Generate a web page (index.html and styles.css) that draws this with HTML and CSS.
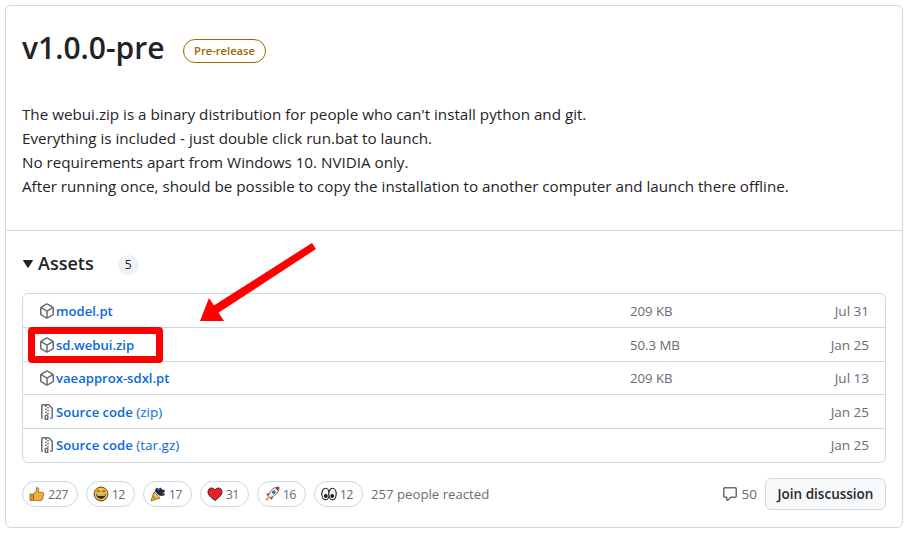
FILE: index.html
```html
<!DOCTYPE html>
<html lang="en">
<head>
  <meta charset="UTF-8">
  <title>v1.0.0-pre</title>
  <link rel="stylesheet" href="styles.css">
</head>
<body>

  <svg width="0" height="0" class="defs">
    <symbol id="i-package" viewBox="0 0 16 16"><path d="m8.878.392 5.25 3.045c.54.314.872.89.872 1.514v6.098a1.75 1.75 0 0 1-.872 1.514l-5.25 3.045a1.75 1.75 0 0 1-1.756 0l-5.25-3.045A1.75 1.75 0 0 1 1 11.049V4.951c0-.624.332-1.201.872-1.514L7.122.392a1.75 1.75 0 0 1 1.756 0ZM7.875 1.69l-4.63 2.685L8 7.133l4.755-2.758-4.63-2.685a.248.248 0 0 0-.25 0ZM2.5 5.677v5.372c0 .09.047.171.125.216l4.625 2.683V8.432Zm6.25 8.271 4.625-2.683a.25.25 0 0 0 .125-.216V5.677L8.75 8.432Z"/></symbol>
    <symbol id="i-zip" viewBox="0 0 16 16"><path d="M3.5 1.75v11.5c0 .09.048.173.126.217a.75.75 0 0 1-.752 1.298A1.748 1.748 0 0 1 2 13.25V1.75C2 .784 2.784 0 3.75 0h5.586c.464 0 .909.185 1.237.513l2.914 2.914c.329.328.513.773.513 1.237v8.586A1.75 1.75 0 0 1 12.25 15h-.5a.75.75 0 0 1 0-1.5h.5a.25.25 0 0 0 .25-.25V4.664a.25.25 0 0 0-.073-.177L9.513 1.573a.25.25 0 0 0-.177-.073H7.25a.75.75 0 0 1 0 1.5h-.5a.75.75 0 0 1 0-1.5h-3a.25.25 0 0 0-.25.25Zm3.75 8.75h.5c.966 0 1.75.784 1.75 1.75v3a.75.75 0 0 1-.75.75h-2.5a.75.75 0 0 1-.75-.75v-3c0-.966.784-1.75 1.75-1.75ZM6 5.25a.75.75 0 0 1 .75-.75h.5a.75.75 0 0 1 0 1.5h-.5A.75.75 0 0 1 6 5.25Zm.75 2.25h.5a.75.75 0 0 1 0 1.5h-.5a.75.75 0 0 1 0-1.5ZM8 6.75A.75.75 0 0 1 8.75 6h.5a.75.75 0 0 1 0 1.5h-.5A.75.75 0 0 1 8 6.75ZM8.75 3h.5a.75.75 0 0 1 0 1.5h-.5a.75.75 0 0 1 0-1.5ZM8 9.75A.75.75 0 0 1 8.75 9h.5a.75.75 0 0 1 0 1.5h-.5A.75.75 0 0 1 8 9.75Zm-1 2.5v2.25h1v-2.25a.25.25 0 0 0-.25-.25h-.5a.25.25 0 0 0-.25.25Z"/></symbol>
  </svg>

  <div class="release">
    <div class="release-main">
      <div class="title-row">
        <h1>v1.0.0-pre</h1>
        <span class="label">Pre-release</span>
      </div>
      <div class="notes">
        <p>The webui.zip is a binary distribution for people who can't install python and git.</p>
        <p>Everything is included - just double click run.bat to launch.</p>
        <p>No requirements apart from Windows 10. NVIDIA only.</p>
        <p>After running once, should be possible to copy the installation to another computer and launch there offline.</p>
      </div>
    </div>

    <div class="release-foot">
      <div class="assets-head">
        <svg class="caret" viewBox="0 0 10 8" width="10" height="8"><path d="M.5.5h9L5 7.5z" stroke="#1f2328" stroke-linejoin="round"/></svg>
        <span class="assets-title">Assets</span>
        <span class="counter">5</span>
      </div>

      <ul class="assets">
        <li>
          <span class="asset-name"><svg class="icon"><use href="#i-package"/></svg><a href="#">model.pt</a></span>
          <span class="asset-size">209 KB</span>
          <span class="asset-date">Jul 31</span>
        </li>
        <li>
          <span class="asset-name"><svg class="icon"><use href="#i-package"/></svg><a href="#">sd.webui.zip</a></span>
          <span class="asset-size">50.3 MB</span>
          <span class="asset-date">Jan 25</span>
        </li>
        <li>
          <span class="asset-name"><svg class="icon"><use href="#i-package"/></svg><a href="#">vaeapprox-sdxl.pt</a></span>
          <span class="asset-size">209 KB</span>
          <span class="asset-date">Jul 13</span>
        </li>
        <li>
          <span class="asset-name"><svg class="icon"><use href="#i-zip"/></svg><a href="#">Source code <span class="ext">(zip)</span></a></span>
          <span class="asset-size"></span>
          <span class="asset-date">Jan 25</span>
        </li>
        <li>
          <span class="asset-name"><svg class="icon"><use href="#i-zip"/></svg><a href="#">Source code <span class="ext">(tar.gz)</span></a></span>
          <span class="asset-size"></span>
          <span class="asset-date">Jan 25</span>
        </li>
      </ul>

      <div class="foot-row">
        <div class="reactions">
          <span class="pill pill-thumb">
            <svg class="emoji" viewBox="0 0 16 16"><path d="M1 8h3.500v6.500H1z" fill="#d99a2b" stroke="#6b4a12" stroke-width=".6"/><path d="M4.500 8 7 5.200l.7-3.700c1.500-.4 2.300.8 2.100 2.300L9.300 6.300h4.200c1 0 1.500.9 1.200 1.800l-1.300 5.500c-.2.700-.7 1-1.400 1H6c-.8 0-1.500-.4-1.500-1z" fill="#f0ae37" stroke="#7a5514" stroke-width=".7"/></svg>
            <span>227</span>
          </span>
          <span class="pill pill-smile">
            <svg class="emoji" viewBox="0 0 16 16"><circle cx="8" cy="8" r="6.900" fill="#f5bd34" stroke="#4a3608" stroke-width=".9"/><path d="M3.800 5.700c.9-1 1.900-1 2.800 0M9.400 5.700c.9-1 1.900-1 2.800 0" fill="none" stroke="#33260a" stroke-width="1"/><path d="M3.300 8h9.400c0 3.200-2.300 4.800-4.700 4.800S3.300 11.200 3.300 8z" fill="#3a2a10"/><path d="M4.200 8.300h7.600v1.300H4.200z" fill="#fff"/></svg>
            <span>12</span>
          </span>
          <span class="pill pill-party">
            <svg class="emoji" viewBox="0 0 16 16"><path d="M1 15 4 6l6 6z" fill="#f5c242" stroke="#6b4e10" stroke-width=".7"/><path d="M3 9l4 4-2 .8-2.700-2.700z" fill="#cf8a2a"/><path d="M4.500 5 6.500 1.500l2 1.500 2-1.500 1.500 2 3 .5-1 3 1 2-3 1-3-.5z" fill="#1b2a45"/><circle cx="8.500" cy="3.500" r="1.100" fill="#2f62b5"/><circle cx="13" cy="7" r="1.200" fill="#b5333a"/></svg>
            <span>17</span>
          </span>
          <span class="pill pill-heart">
            <svg class="emoji" viewBox="0 0 16 16"><path d="M8 14.500C3.500 11.200 1 8.800 1 5.800 1 3.500 2.700 2 4.600 2 6 2 7.300 2.800 8 4 8.700 2.800 10 2 11.400 2 13.300 2 15 3.500 15 5.800c0 3-2.500 5.400-7 8.700z" fill="#e51f2d" stroke="#3f0d12" stroke-width=".9"/></svg>
            <span>31</span>
          </span>
          <span class="pill pill-rocket">
            <svg class="emoji" viewBox="0 0 16 16"><path d="M15 1c-4 0-7.500 2-9.500 6L4 10l2 2 3-1.500c4-2 6-5.500 6-9.500z" fill="#e9eef3" stroke="#2f3a48" stroke-width=".7"/><path d="M15 1c-1.500 0-2.800.2-4 .8L14.200 5c.6-1.200.8-2.500.8-4z" fill="#d8232a"/><circle cx="9.800" cy="6.200" r="1.500" fill="#3f8fd6" stroke="#2a3a4c" stroke-width=".6"/><path d="M5.500 7 2 8l2 2zM9 10.500 8 14l-2-2z" fill="#c7303a"/><path d="M4 11l1 1c-.5 1.500-1.500 2.500-3.500 2.800C1.700 13 2.500 11.800 4 11z" fill="#f08a24"/></svg>
            <span>16</span>
          </span>
          <span class="pill pill-eyes">
            <svg class="emoji" viewBox="0 0 16 16"><ellipse cx="4.500" cy="8" rx="3.700" ry="5.800" fill="#f6f6f6" stroke="#222" stroke-width="1.100"/><ellipse cx="11.500" cy="8" rx="3.700" ry="5.800" fill="#f6f6f6" stroke="#222" stroke-width="1.100"/><circle cx="4.800" cy="10" r="1.900" fill="#1c1c1c"/><circle cx="11.200" cy="10" r="1.900" fill="#1c1c1c"/></svg>
            <span>12</span>
          </span>
          <span class="reacted">257 people reacted</span>
        </div>
        <div class="discussion">
          <svg class="icon" viewBox="0 0 16 16"><path d="M1 2.750C1 1.784 1.784 1 2.750 1h10.500c.966 0 1.750.784 1.750 1.750v7.500A1.750 1.750 0 0 1 13.250 12H9.060l-2.573 2.573A1.458 1.458 0 0 1 4 13.543V12H2.750A1.750 1.750 0 0 1 1 10.250Zm1.750-.25a.25.25 0 0 0-.25.25v7.500c0 .138.112.25.25.25h2a.75.75 0 0 1 .75.75v2.190l2.720-2.720a.749.749 0 0 1 .53-.22h4.500a.25.25 0 0 0 .25-.25v-7.500a.25.25 0 0 0-.25-.25Z"/></svg>
          <span class="comment-count">50</span>
          <button class="btn">Join discussion</button>
        </div>
      </div>
    </div>
  </div>

  <!-- annotation drawn over the screenshot -->
  <div class="mark-box"></div>
  <svg class="mark-arrow" width="130" height="90" viewBox="0 0 130 90">
    <path d="M117 3 121 9 23 73 18 66z" fill="#fe0000"/>
    <polygon points="5,81 14,58 29,81" fill="#fe0000"/>
  </svg>

</body>
</html>
```

FILE: styles.css
```css
* {
  box-sizing: border-box;
}
body {
  margin: 0;
  background: #fff;
  color: #1f2328;
  font-family: "Open Sans", "Noto Sans", Arial, sans-serif;
  font-size: 14px;
  position: relative;
  width: 910px;
  height: 540px;
  overflow: hidden;
}
.defs {
  display: block;
  height: 0;
}
.release {
  margin: 5px 0 0 5px;
  width: 898px;
  height: 523px;
  border: 1px solid #d0d7de;
  border-radius: 6px;
}
.release-main {
  height: 225px;
  padding: 0 16px;
  border-bottom: 1px solid #d0d7de;
}
.title-row {
  display: flex;
  align-items: flex-start;
  gap: 18px;
  padding-top: 18px;
  height: 74px;
}
h1 {
  margin: 0;
  font-size: 30px;
  font-weight: 600;
  line-height: 48px;
}
.label {
  margin-top: 15px;
  border: 1px solid #9a6700;
  border-radius: 12px;
  color: #9a6700;
  font-size: 11.2px;
  font-weight: 600;
  line-height: 22px;
  height: 24px;
  padding: 0 10.5px;
}
.notes {
  margin-top: 22px;
  font-size: 15.2px;
  line-height: 24px;
}
.notes p {
  margin: 0;
}
.release-foot {
  padding: 0 16px;
}
.assets-head {
  display: flex;
  align-items: center;
  height: 62px;
  padding-top: 2px;
}
.caret {
  fill: #1f2328;
  margin: 1px 5px 0 1px;
}
.assets-title {
  font-size: 18px;
  font-weight: 600;
}
.counter {
  margin: 3px 0 0 24px;
  background: #eff2f5;
  border-radius: 10px;
  font-size: 12px;
  font-weight: 500;
  line-height: 20px;
  padding: 0 7px;
}
.assets {
  list-style: none;
  margin: 0;
  padding: 0;
  border: 1px solid #d0d7de;
  border-radius: 6px;
  height: 170px;
}
.assets li {
  display: grid;
  grid-template-columns: 1fr 156px 83px;
  align-items: center;
  height: 33.4px;
  padding: 0.6px 16px 0;
  border-top: 1px solid #d0d7de;
}
.assets li:first-child {
  border-top: none;
}
.asset-name {
  display: flex;
  align-items: center;
}
.icon {
  width: 16px;
  height: 16px;
  fill: #656d76;
  flex: none;
}
.asset-name a {
  margin-left: 1px;
  color: #0969da;
  font-weight: 600;
  font-size: 13.1px;
  text-decoration: none;
}
.ext {
  font-weight: 400;
  font-size: 13.5px;
}
.asset-size {
  color: #656d76;
  font-size: 13.2px;
}
.asset-date {
  color: #656d76;
  font-size: 13.5px;
  text-align: right;
}
.foot-row {
  display: flex;
  justify-content: space-between;
  align-items: center;
  margin-top: 15px;
}
.reactions {
  display: flex;
  align-items: center;
  gap: 8px;
}
.pill {
  display: flex;
  align-items: center;
  justify-content: space-between;
  width: 49px;
  height: 26px;
  padding: 0 9px 0 6px;
  border: 1px solid #d0d7de;
  border-radius: 13px;
  color: #656d76;
  font-size: 12.5px;
  letter-spacing: -0.5px;
}
.pill-thumb {
  width: 56px;
}
.emoji {
  width: 16px;
  height: 16px;
  flex: none;
}
.reacted {
  color: #656d76;
  font-size: 13.2px;
}
.discussion {
  display: flex;
  align-items: center;
  color: #656d76;
}
.comment-count {
  margin-left: 4px;
  font-size: 13.5px;
}
.btn {
  margin-left: 8px;
  height: 32px;
  width: 121px;
  padding: 0;
  font-family: inherit;
  font-size: 13.5px;
  font-weight: 600;
  color: #24292f;
  background: #f6f8fa;
  border: 1px solid #d5d9de;
  border-radius: 6px;
}
.mark-box {
  position: absolute;
  left: 28px;
  top: 327px;
  width: 135px;
  height: 36px;
  border: 7px solid #fe0000;
  border-radius: 4px;
}
.mark-arrow {
  position: absolute;
  left: 195px;
  top: 240px;
}
```
